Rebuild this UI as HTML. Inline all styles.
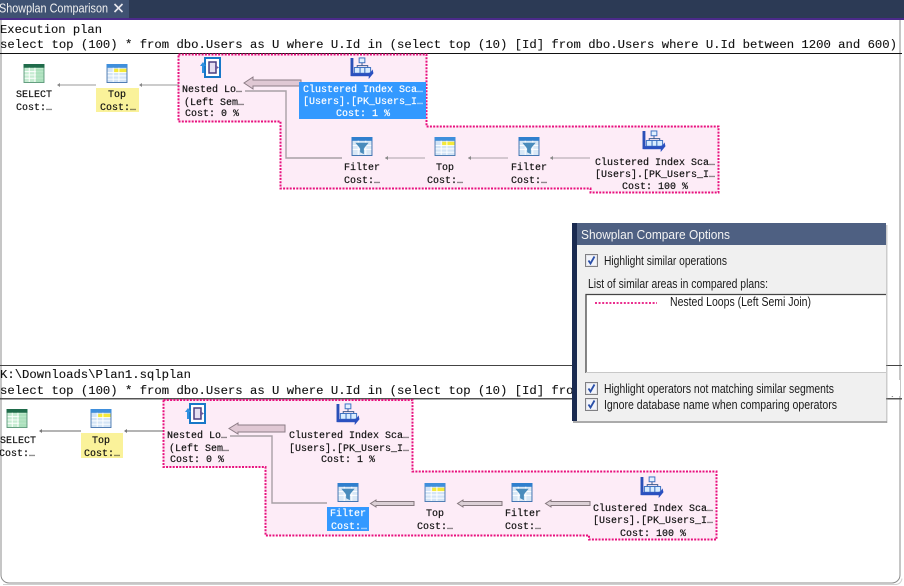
<!DOCTYPE html>
<html><head><meta charset="utf-8"><style>
html,body{margin:0;padding:0;background:#fff;overflow:hidden}
svg{display:block;filter:blur(.25px)}
.m{font-family:"Liberation Mono",monospace;font-size:10px;fill:#111;stroke:#111;stroke-width:.18px}
.c{text-anchor:middle}
.m.w{fill:#fff;stroke:#fff}
.h{font-family:"Liberation Mono",monospace;font-size:12.2px;fill:#111;stroke:#111;stroke-width:.12px}
.s{font-family:"Liberation Sans",sans-serif;font-size:12.6px;fill:#1a1a1a}
</style></head><body>
<svg width="904" height="586" viewBox="0 0 904 586" xmlns="http://www.w3.org/2000/svg">
<defs>
<symbol id="tg" viewBox="0 0 22 20"><rect width="22" height="20" fill="#5f9a7c"/><rect y="0" width="22" height="4" fill="#1f6b4a"/><rect x="1" y="4" width="20" height="15" fill="#c6ecd2"/><path d="M1 8h20M1 11.500h20M1 15h20M6 4v15M12 4v15" stroke="#fff" stroke-width="1"/><rect x="13" y="5" width="8" height="14" fill="#9fdcb2" opacity=".7"/></symbol>
<symbol id="ty" viewBox="0 0 22 20"><rect width="22" height="20" fill="#4a78b0"/><rect width="22" height="4" fill="#3f8fdc"/><rect x="1" y="4" width="20" height="15" fill="#d3e4f6"/><rect x="8" y="5" width="13" height="4" fill="#f4e93a"/><path d="M1 9h20M1 12.500h20M1 16h20M7 4v15M13 4v15" stroke="#fff" stroke-width="1"/></symbol>
<symbol id="tf" viewBox="0 0 22 20"><rect width="22" height="20" fill="#3d6fae"/><rect width="22" height="4" fill="#2f7fce"/><rect x="1" y="4" width="20" height="15" fill="#d9e8f6"/><path d="M1 9h20M1 13h20M7 4v15M15 4v15" stroke="#fff"/><path d="M4 6h14l-5 6v6l-4-2v-4z" fill="#4a8cbc"/></symbol>
<symbol id="nl" viewBox="0 0 21 21"><rect x="5" y="1" width="15" height="19" fill="#fff" stroke="#1878c8" stroke-width="2"/><rect x="9" y="5" width="7" height="11" fill="#e4def0" stroke="#4a3f80" stroke-width="1.500"/><path d="M15 8l4 2.500-4 2.500z" fill="#6a5a9a"/><path d="M3 16V8" stroke="#2f90e0" stroke-width="2"/><path d="M0 9l3-4 3 4z" fill="#2f90e0"/></symbol>
<symbol id="ci" viewBox="0 0 24 23"><path d="M1.500 1v17.500h17" fill="none" stroke="#2a50b8" stroke-width="3"/><rect x="9" y="1" width="6" height="5" fill="#e2f0ff" stroke="#3a6fc0"/><path d="M12 6v3M7 11V9h11v2" fill="none" stroke="#3a5a90"/><rect x="4" y="11" width="6" height="6" fill="#d8ecff" stroke="#3a6fc0"/><rect x="10" y="11" width="5" height="6" fill="#d8ecff" stroke="#3a6fc0"/><rect x="15" y="11" width="6" height="6" fill="#d8ecff" stroke="#3a6fc0"/><path d="M1 17h17l3-1 2-3 1 4-5 6v-3H1z" fill="#2a50c0"/></symbol>
<symbol id="cb" viewBox="0 0 13 13"><rect x=".5" y=".5" width="12" height="12" fill="#e4e4e8" stroke="#808084"/><rect x="2" y="2" width="9" height="9" fill="#f2f4fa"/><path d="M3.500 6.500l2 3 4-7" fill="none" stroke="#2a4fa8" stroke-width="1.800"/></symbol>
</defs>

<!-- window border -->
<rect x="1" y="10" width="899" height="573" rx="8" fill="#fff" stroke="#8c8c8c" stroke-width="1"/>
<path d="M3 584.500h892q6 0 7-6" fill="none" stroke="#d0d0d0"/>

<!-- tab strip -->
<rect width="904" height="19" fill="#2c3a55"/>
<rect width="129" height="18" fill="#3f5272"/>
<rect y="18" width="904" height="2" fill="#4b2a8a"/>
<text x="-1" y="12.500" font-family="Liberation Sans,sans-serif" font-size="13" fill="#f0f0f0" textLength="109" lengthAdjust="spacingAndGlyphs">Showplan Comparison</text>
<path d="M114.500 4l8 8M122.500 4l-8 8" stroke="#e8e8ee" stroke-width="1.600"/>

<!-- top header -->
<text class="h" x="0" y="33" textLength="102" lengthAdjust="spacingAndGlyphs">Execution plan</text>
<text class="h" x="0" y="48" textLength="897" lengthAdjust="spacingAndGlyphs">select top (100) * from dbo.Users as U where U.Id in (select top (10) [Id] from dbo.Users where U.Id between 1200 and 600)</text>
<rect x="0" y="53" width="902" height="1" fill="#111"/>

<!-- top pink area -->
<path d="M178.500 54.500H426.500V126.500H718.500V192.500H590.500V188.500H280.500V121.500H178.500Z" fill="#fdecf7" stroke="#e8107e" stroke-width="2" stroke-dasharray="2 1.300"/>

<!-- top connectors -->
<path d="M96 85H59M179 85H141" stroke="#999" stroke-width="1"/>
<path d="M57 85l3-2v4zM139 85l3-2v4z" fill="#888"/>
<path d="M301 80H253V77L244 83 253 89V86H301Z" fill="#e0c8d4" stroke="#8c7c86"/>
<path d="M245 91H286V158H342" fill="none" stroke="#a8a0a6" stroke-width="1.400"/>
<path d="M385 158H425M468 158H508M550 158H590" stroke="#aaa2a8"/>
<path d="M385 158l3-2v4zM468 158l3-2v4zM550 158l3-2v4z" fill="#888"/>

<!-- top nodes -->
<use href="#tg" x="23" y="64" width="22" height="19"/>
<text class="m c" x="34" y="97">SELECT</text>
<text class="m c" x="34" y="110">Cost:…</text>
<rect x="96" y="88" width="43" height="24" fill="#faf29a"/>
<use href="#ty" x="106" y="64" width="22" height="19"/>
<text class="m c" x="117" y="97">Top</text>
<text class="m c" x="118" y="110">Cost:…</text>
<use href="#nl" x="200" y="57" width="21" height="21"/>
<text class="m" x="182" y="92">Nested Lo…</text>
<text class="m" x="184" y="105">(Left Sem…</text>
<text class="m" x="185" y="116">Cost: 0 %</text>
<rect x="299" y="82" width="127" height="37" fill="#3399ff"/>
<use href="#ci" x="350" y="57" width="24" height="22"/>
<text class="m c w" x="363" y="92">Clustered Index Sca…</text>
<text class="m c w" x="363" y="104">[Users].[PK_Users_I…</text>
<text class="m c w" x="363" y="116">Cost: 1 %</text>
<use href="#tf" x="351" y="137" width="22" height="19"/>
<text class="m c" x="362" y="170">Filter</text>
<text class="m c" x="362" y="183">Cost:…</text>
<use href="#ty" x="434" y="137" width="22" height="19"/>
<text class="m c" x="445" y="170">Top</text>
<text class="m c" x="445" y="183">Cost:…</text>
<use href="#tf" x="518" y="137" width="22" height="19"/>
<text class="m c" x="529" y="170">Filter</text>
<text class="m c" x="529" y="183">Cost:…</text>
<use href="#ci" x="642" y="130" width="24" height="22"/>
<text class="m c" x="655" y="165">Clustered Index Sca…</text>
<text class="m c" x="655" y="177">[Users].[PK_Users_I…</text>
<text class="m c" x="655" y="189">Cost: 100 %</text>

<!-- bottom header -->
<rect x="0" y="365" width="902" height="1" fill="#444"/>
<text class="h" x="0" y="378" textLength="191" lengthAdjust="spacingAndGlyphs">K:\Downloads\Plan1.sqlplan</text>
<text class="h" x="0" y="394" textLength="897" lengthAdjust="spacingAndGlyphs">select top (100) * from dbo.Users as U where U.Id in (select top (10) [Id] from dbo.Users where U.Id between 1200 and 600)</text>
<rect x="880" y="380" width="20" height="16" fill="#fff"/>
<rect x="0" y="398" width="902" height="1.500" fill="#555"/>

<!-- bottom pink area -->
<path d="M163.500 400H412.500V471.500H716.500V539.500H589V535.500H265.500V467H163.500Z" fill="#fdecf7" stroke="#e8107e" stroke-width="2" stroke-dasharray="2 1.300"/>

<!-- bottom connectors -->
<path d="M41 431H81M126 431H163" stroke="#888" stroke-width="1.300"/>
<path d="M39 431l3-2v4zM124 431l3-2v4z" fill="#777"/>
<path d="M285 425H238V423L229 428.500 238 434V432H285Z" fill="#e0c8d4" stroke="#8c7c86"/>
<path d="M230 436H272V503H327" fill="none" stroke="#a8a0a6" stroke-width="1.400"/>
<path d="M414 501.500H376V500L370.500 503.500 376 507V505.500H414ZM502 501.500H463V500L457.500 503.500 463 507V505.500H502ZM590 501.500H551V500L545.500 503.500 551 507V505.500H590Z" fill="#dcd0d6" stroke="#85787e"/>

<!-- bottom nodes -->
<use href="#tg" x="6" y="409" width="22" height="19"/>
<text class="m c" x="18" y="443">SELECT</text>
<text class="m c" x="17" y="456">Cost:…</text>
<rect x="81" y="433" width="42" height="25" fill="#faf29a"/>
<use href="#ty" x="90" y="409" width="22" height="19"/>
<text class="m c" x="101" y="443">Top</text>
<text class="m c" x="102" y="456">Cost:…</text>
<use href="#nl" x="185" y="403" width="21" height="21"/>
<text class="m" x="167" y="438">Nested Lo…</text>
<text class="m" x="169" y="451">(Left Sem…</text>
<text class="m" x="170" y="462">Cost: 0 %</text>
<use href="#ci" x="336" y="403" width="24" height="22"/>
<text class="m c" x="349" y="438">Clustered Index Sca…</text>
<text class="m c" x="349" y="451">[Users].[PK_Users_I…</text>
<text class="m c" x="348" y="462">Cost: 1 %</text>
<rect x="327" y="507" width="42" height="24" fill="#3399ff"/>
<use href="#tf" x="337" y="483" width="22" height="19"/>
<text class="m c w" x="348" y="516">Filter</text>
<text class="m c w" x="349" y="529">Cost:…</text>
<use href="#ty" x="424" y="483" width="22" height="19"/>
<text class="m c" x="435" y="516">Top</text>
<text class="m c" x="435" y="529">Cost:…</text>
<use href="#tf" x="511" y="483" width="22" height="19"/>
<text class="m c" x="523" y="516">Filter</text>
<text class="m c" x="523" y="529">Cost:…</text>
<use href="#ci" x="640" y="476" width="24" height="22"/>
<text class="m c" x="653" y="511">Clustered Index Sca…</text>
<text class="m c" x="653" y="523">[Users].[PK_Users_I…</text>
<text class="m c" x="653" y="536">Cost: 100 %</text>

<!-- options panel -->
<rect x="573" y="421" width="314" height="2" fill="#666" opacity=".55"/>
<rect x="886" y="225" width="1.500" height="198" fill="#999" opacity=".5"/>
<rect x="572" y="223" width="5" height="198" fill="#1a2a50"/>
<rect x="577" y="245" width="309" height="176" fill="#f0f0f0"/>
<rect x="577" y="223" width="309" height="22" fill="#4e6082"/>
<text x="581" y="239" font-family="Liberation Sans,sans-serif" font-size="13" fill="#f4f4f4" textLength="149" lengthAdjust="spacingAndGlyphs">Showplan Compare Options</text>
<use href="#cb" x="585" y="254" width="13" height="13"/>
<text class="s" x="604" y="265" textLength="123" lengthAdjust="spacingAndGlyphs">Highlight similar operations</text>
<text class="s" x="588" y="288" textLength="180" lengthAdjust="spacingAndGlyphs">List of similar areas in compared plans:</text>
<rect x="586" y="294.500" width="300" height="78" fill="#fff"/>
<path d="M586 373V294.500H886" fill="none" stroke="#444" stroke-width="1.300"/>
<path d="M586 372.500H886" stroke="#c8c8c8"/>
<path d="M595 303H657" stroke="#e8107e" stroke-width="1.800" stroke-dasharray="2 1.600"/>
<text class="s" x="670" y="306" textLength="141" lengthAdjust="spacingAndGlyphs">Nested Loops (Left Semi Join)</text>
<use href="#cb" x="585" y="382" width="13" height="13"/>
<text class="s" x="604" y="393" textLength="230" lengthAdjust="spacingAndGlyphs">Highlight operators not matching similar segments</text>
<use href="#cb" x="585" y="398" width="13" height="13"/>
<text class="s" x="604" y="409" textLength="233" lengthAdjust="spacingAndGlyphs">Ignore database name when comparing operators</text>
</svg>
</body></html>
